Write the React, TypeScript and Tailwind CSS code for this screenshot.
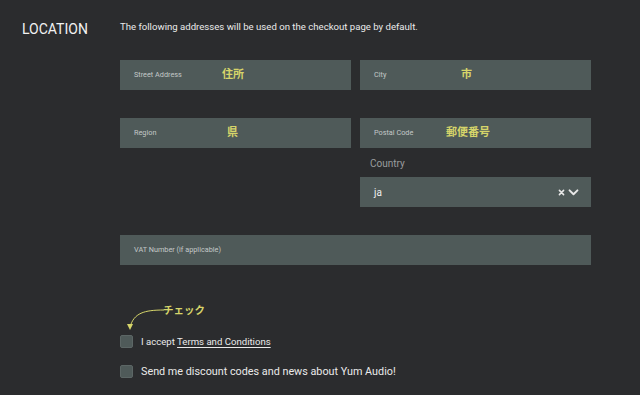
const font = { fontFamily: 'Roboto, "Noto Sans CJK JP", sans-serif' };

function Field({ label, note, noteLeft }: { label: string; note?: string; noteLeft?: string }) {
  return (
    <div className="relative flex h-[30px] items-center bg-[#4f5a59] pl-[14px] text-[7.3px] text-[#c3c8c7]">
      {label}
      {note && (
        <span className={`absolute top-[7px] text-[11px] font-bold text-[#d6d56a] ${noteLeft}`}>{note}</span>
      )}
    </div>
  );
}

export default function App() {
  return (
    <div className="flex h-[395px] w-[640px] bg-[#2b2c2e] text-white" style={font}>
      <div className="w-[120px] pl-[22px] pt-[19px] text-[14px] text-[#f2f2f2]">LOCATION</div>
      <div className="w-[471px] pt-[20px]">
        <p className="text-[9.6px] text-[#eaeaea]">The following addresses will be used on the checkout page by default.</p>
        <div className="mt-[26px] grid grid-cols-2 gap-x-[9px]">
          <Field label="Street Address" note="住所" noteLeft="left-[102px]" />
          <Field label="City" note="市" noteLeft="left-[101px]" />
        </div>
        <div className="mt-[28px] grid grid-cols-2 gap-x-[9px]">
          <Field label="Region" note="県" noteLeft="left-[107px]" />
          <div>
            <Field label="Postal Code" note="郵便番号" noteLeft="left-[86px]" />
            <div className="pl-[10px] pt-[9px] text-[10px] leading-[14px] text-[#9a9d9f]">Country</div>
            <div className="mt-[6px] flex h-[30px] items-center justify-between bg-[#4f5a59] pl-[14px] pr-[12px]">
              <span className="text-[10px] text-[#f0f0f0]">ja</span>
              <span className="flex items-center gap-[3px]">
                <svg width="7" height="7" viewBox="0 0 10 10">
                  <path d="M2 2 8 8M8 2 2 8" stroke="#e8e8e8" strokeWidth="2.2" strokeLinecap="round" />
                </svg>
                <svg width="11" height="7" viewBox="0 0 12 8">
                  <path d="M1.5 1.5 6 6 10.5 1.5" fill="none" stroke="#e8e8e8" strokeWidth="2.2" strokeLinecap="round" strokeLinejoin="round" />
                </svg>
              </span>
            </div>
          </div>
        </div>
        <div className="mt-[28px]">
          <Field label="VAT Number (if applicable)" />
        </div>
        <div className="relative mt-[70px] flex h-[13px] items-center gap-[8px]">
          <div className="h-[13px] w-[13px] rounded-[2px] border border-[#5c6665] bg-[#4f5a59]" />
          <span className="text-[9.6px] text-[#eaeaea]">
            I accept <span className="underline underline-offset-2">Terms and Conditions</span>
          </span>
          <svg className="absolute left-[4px] top-[-28px]" width="46" height="26" viewBox="0 0 46 26">
            <path d="M40 3 C 20 3 10 6 6 20" fill="none" stroke="#d6d56a" strokeWidth="1" />
            <path d="M3 17 6 23 9 17" fill="#d6d56a" />
          </svg>
          <span className="absolute left-[43px] top-[-32px] text-[10.5px] font-bold text-[#d6d56a]">チェック</span>
        </div>
        <div className="mt-[17px] flex h-[13px] items-center gap-[8px]">
          <div className="h-[13px] w-[13px] rounded-[2px] border border-[#5c6665] bg-[#4f5a59]" />
          <span className="text-[10.8px] text-[#eaeaea]">Send me discount codes and news about Yum Audio!</span>
        </div>
      </div>
    </div>
  );
}
